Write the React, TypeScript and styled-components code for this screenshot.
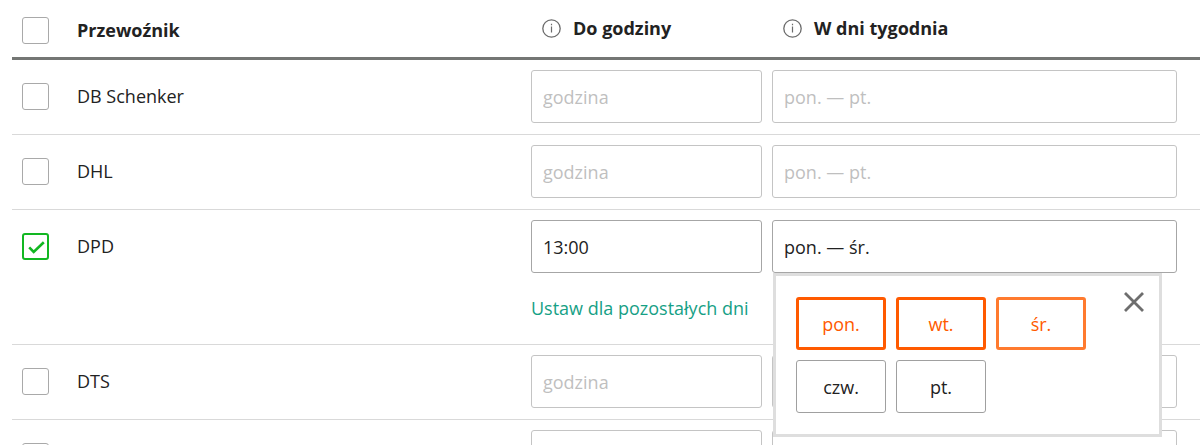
import React, { useState } from "react";
import styled, { createGlobalStyle } from "styled-components";

const GlobalStyle = createGlobalStyle`
  *, *::before, *::after { box-sizing: border-box; }
  html { overflow-x: hidden; scrollbar-width: none; }
  body {
    margin: 0;
    background: #fff;
    color: #222;
    font: 18px/24px "Open Sans", "Noto Sans", sans-serif;
  }
  input, button { font: inherit; color: inherit; }
`;

const Page = styled.main`
  padding-left: 12px;
`;

const Table = styled.table`
  width: 100%;
  table-layout: fixed;
  border-spacing: 0;
  border-collapse: separate;
`;

const Column = styled.col<{ $width?: number }>`
  width: ${({ $width }) => ($width ? `${$width}px` : "auto")};
`;

const HeadCell = styled.th<{ $top: number; $left?: number }>`
  height: 60px;
  padding: ${({ $top, $left = 0 }) => `${$top}px 0 0 ${$left}px`};
  border-bottom: 3px solid #747674;
  vertical-align: top;
  text-align: left;
  font-weight: 700;
  line-height: 27px;
`;

const HeadLabel = styled.span`
  display: flex;
  align-items: center;
  gap: 12px;
`;

const Cell = styled.td`
  padding: 10px 0;
  border-bottom: 1px solid #d9d9d9;
  vertical-align: top;
`;

const CheckCell = styled(Cell)`
  padding: 23px 0 0 10px;
`;

const NameCell = styled(Cell)`
  line-height: 53px;
`;

const TimeCell = styled(Cell)`
  padding: 10px 10px 11px 0;
`;

const DaysCell = styled(Cell)`
  padding-right: 23px;
`;

const CheckBox = styled.span`
  display: grid;
  width: 27px;
  height: 27px;

  > * { grid-area: 1 / 1; }

  input {
    appearance: none;
    width: 27px;
    height: 27px;
    margin: 0;
    border: 1px solid #a9a9a9;
    border-radius: 3px;
    background: #fff;
  }
  input:checked { border: 2px solid #12b722; }

  svg {
    place-self: center;
    pointer-events: none;
    visibility: hidden;
  }
  input:checked + svg { visibility: visible; }
`;

const Field = styled.input`
  display: block;
  width: 100%;
  height: 53px;
  padding: 0 11px;
  border: 1px solid #a6a6a6;
  border-radius: 3px;
  background: #fff;
  outline: none;

  &::placeholder { color: #bfbfbf; opacity: 1; }
  &:placeholder-shown { border-color: #c4c4c4; }
`;

const TextLink = styled.a`
  display: block;
  margin: 23px 0 13px;
  color: #16a085;
  text-decoration: none;
  white-space: nowrap;
`;

const DaysField = styled.div`
  position: relative;
`;

const Popover = styled.div`
  position: absolute;
  z-index: 1;
  top: 100%;
  left: 1px;
  right: 15px;
  display: flex;
  justify-content: space-between;
  align-items: flex-start;
  padding: 21px 20px;
  border: 3px solid #dedede;
  background: #fff;
`;

const DayGrid = styled.div`
  display: grid;
  grid-template-columns: repeat(3, 90px);
  gap: 10px;
`;

const DayButton = styled.button<{ $light?: boolean }>`
  height: 53px;
  padding: 0;
  border: 1px solid #a0a0a0;
  border-radius: 3px;
  background: #fff;

  &[aria-pressed="true"] {
    border: 3px solid ${({ $light }) => ($light ? "#ff7a2e" : "#ff5a00")};
    color: #ff5a00;
  }
`;

const CloseButton = styled.button`
  display: grid;
  place-items: center;
  width: 30px;
  height: 30px;
  margin: -10px -10px 0 0;
  padding: 0;
  border: 0;
  background: none;
`;

function Check({ label, checked = false }: { label: string; checked?: boolean }) {
  return (
    <CheckBox>
      <input type="checkbox" aria-label={label} defaultChecked={checked} />
      <svg width="27" height="27" viewBox="0 0 27 27" fill="none" aria-hidden="true">
        <path d="M7.2 14.3 11.7 18.9 21.8 9.2" stroke="#12b722" strokeWidth="2.6" />
      </svg>
    </CheckBox>
  );
}

function InfoIcon() {
  return (
    <svg width="19" height="19" viewBox="0 0 19 19" fill="none" stroke="#6b6b6b" aria-hidden="true">
      <circle cx="9.5" cy="9.5" r="8.7" strokeWidth="1.3" />
      <path d="M9.5 7.5v6M9.5 4.8v1.4" strokeWidth="1.2" />
    </svg>
  );
}

const week = ["pon.", "wt.", "śr.", "czw.", "pt."];

function DayPicker({ onClose }: { onClose: () => void }) {
  const [picked, setPicked] = useState(["pon.", "wt.", "śr."]);
  const toggle = (day: string) =>
    setPicked((now) => (now.includes(day) ? now.filter((d) => d !== day) : [...now, day]));

  return (
    <Popover role="group" aria-label="W dni tygodnia">
      <DayGrid>
        {week.map((day) => (
          <DayButton
            key={day}
            type="button"
            aria-pressed={picked.includes(day)}
            $light={day === "śr."}
            onClick={() => toggle(day)}
          >
            {day}
          </DayButton>
        ))}
      </DayGrid>
      <CloseButton type="button" aria-label="Zamknij" onClick={onClose}>
        <svg width="20" height="20" viewBox="0 0 20 20" stroke="#6e6e6e" strokeWidth="2.8" aria-hidden="true">
          <path d="M1 1l18 18M19 1 1 19" />
        </svg>
      </CloseButton>
    </Popover>
  );
}

type Carrier = { name: string; time?: string; days?: string };

const carriers: Carrier[] = [
  { name: "DB Schenker" },
  { name: "DHL" },
  { name: "DPD", time: "13:00", days: "pon. — śr." },
  { name: "DTS" },
  { name: "" },
];

function CarrierRow({ name, time, days }: Carrier) {
  const [open, setOpen] = useState(Boolean(days));
  return (
    <tr>
      <CheckCell>
        <Check label={name || "Przewoźnik"} checked={Boolean(time)} />
      </CheckCell>
      <NameCell>{name}</NameCell>
      <TimeCell>
        <Field type="text" aria-label={`Do godziny ${name}`} placeholder="godzina" defaultValue={time} />
        {time && <TextLink href="#dni">Ustaw dla pozostałych dni</TextLink>}
      </TimeCell>
      <DaysCell>
        <DaysField>
          <Field
            type="text"
            aria-label={`W dni tygodnia ${name}`}
            placeholder="pon. — pt."
            defaultValue={days}
          />
          {open && <DayPicker onClose={() => setOpen(false)} />}
        </DaysField>
      </DaysCell>
    </tr>
  );
}

export default function App() {
  return (
    <Page>
      <GlobalStyle />
      <Table>
        <colgroup>
          <Column $width={65} />
          <Column />
          <Column $width={241} />
          <Column $width={428} />
        </colgroup>
        <thead>
          <tr>
            <HeadCell $top={17} $left={10}>
              <Check label="Zaznacz wszystkie" />
            </HeadCell>
            <HeadCell $top={17}>Przewoźnik</HeadCell>
            <HeadCell $top={15} $left={11}>
              <HeadLabel>
                <InfoIcon />
                Do godziny
              </HeadLabel>
            </HeadCell>
            <HeadCell $top={15} $left={11}>
              <HeadLabel>
                <InfoIcon />W dni tygodnia
              </HeadLabel>
            </HeadCell>
          </tr>
        </thead>
        <tbody>
          {carriers.map((carrier, index) => (
            <CarrierRow key={index} {...carrier} />
          ))}
        </tbody>
      </Table>
    </Page>
  );
}
